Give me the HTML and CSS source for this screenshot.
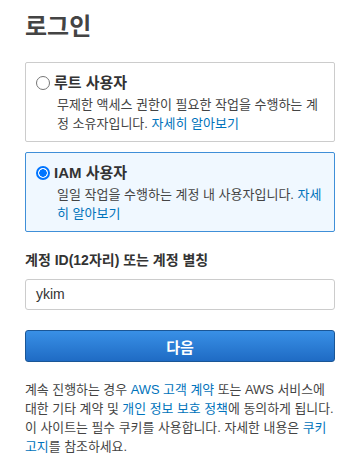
FILE: index.html
```html
<!DOCTYPE html>
<html lang="ko">
<head>
    <meta charset="UTF-8">
    <meta name="viewport" content="width=device-width, initial-scale=1.0">
    <title>로그인</title>
    <link rel="stylesheet" href="styles.css">
</head>
<body>
    <div class="container">
        <h1>로그인</h1>

        <label class="option">
            <span class="option-head">
                <span class="radio"></span>
                <span class="option-title">루트 사용자</span>
            </span>
            <span class="option-desc">무제한 액세스 권한이 필요한 작업을 수행하는 계정 소유자입니다. <a href="#">자세히 알아보기</a></span>
        </label>

        <label class="option option-selected">
            <span class="option-head">
                <span class="radio radio-checked"></span>
                <span class="option-title">IAM 사용자</span>
            </span>
            <span class="option-desc">일일 작업을 수행하는 계정 내 사용자입니다. <a href="#">자세히 알아보기</a></span>
        </label>

        <div class="field">
            <div class="field-label">계정 ID(12자리) 또는 계정 별칭</div>
            <div class="input">ykim</div>
        </div>

        <button class="btn">다음</button>

        <p class="legal">계속 진행하는 경우 <a href="#">AWS 고객 계약</a> 또는 AWS 서비스에 대한 기타 계약 및 <a href="#">개인 정보 보호 정책</a>에 동의하게 됩니다. 이 사이트는 필수 쿠키를 사용합니다. 자세한 내용은 <a href="#">쿠키 고지</a>를 참조하세요.</p>
    </div>
</body>
</html>
```

FILE: styles.css
```css
body {
    font-family: "Liberation Sans", "Noto Sans CJK KR", sans-serif;
    background: #ffffff;
    color: #444444;
    margin: 0;
}
.container {
    width: 310px;
    padding: 0 0 0 25px;
}
h1 {
    font-size: 24px;
    font-weight: 700;
    color: #444444;
    margin: 12px 0 0;
    line-height: 30px;
}
a {
    color: #0073bb;
    text-decoration: none;
}
.option {
    display: block;
    border: 1px solid #cccccc;
    border-radius: 2px;
    padding: 10px 10px 8px 10px;
    margin-top: 20px;
}
.option + .option {
    margin-top: 10px;
}
.option-selected {
    background: #f0f8ff;
    border-color: #3f8fd8;
}
.option-head {
    display: flex;
    align-items: center;
    gap: 4px;
}
.radio {
    width: 14px;
    height: 14px;
    border: 1px solid #767676;
    border-radius: 50%;
    background: #ffffff;
    box-sizing: border-box;
}
.radio-checked {
    border: 2px solid #0075ff;
    background: radial-gradient(circle, #0075ff 3.5px, #ffffff 4px);
}
.option-title {
    font-size: 15px;
    font-weight: 700;
    color: #333333;
    line-height: 20px;
}
.option-desc {
    display: block;
    font-size: 13px;
    line-height: 19px;
    padding: 2px 0 0 21px;
    color: #444444;
    word-break: break-all;
}
.field {
    margin-top: 18px;
}
.field-label {
    font-size: 14px;
    font-weight: 700;
    color: #333333;
    line-height: 20px;
}
.input {
    margin-top: 9px;
    height: 31px;
    box-sizing: border-box;
    border: 1px solid #cccccc;
    border-radius: 3px;
    padding: 4px 10px;
    font-size: 14px;
    line-height: 21px;
    color: #333333;
}
.btn {
    display: block;
    width: 310px;
    height: 32px;
    margin-top: 20px;
    background: linear-gradient(#3990e6, #1f6bc4);
    border: 1px solid #1a5696;
    border-radius: 3px;
    color: #ffffff;
    font-family: inherit;
    font-size: 15px;
    font-weight: 700;
}
.legal {
    font-size: 12.9px;
    line-height: 19px;
    margin: 18px 0 0;
    color: #444444;
}
```
